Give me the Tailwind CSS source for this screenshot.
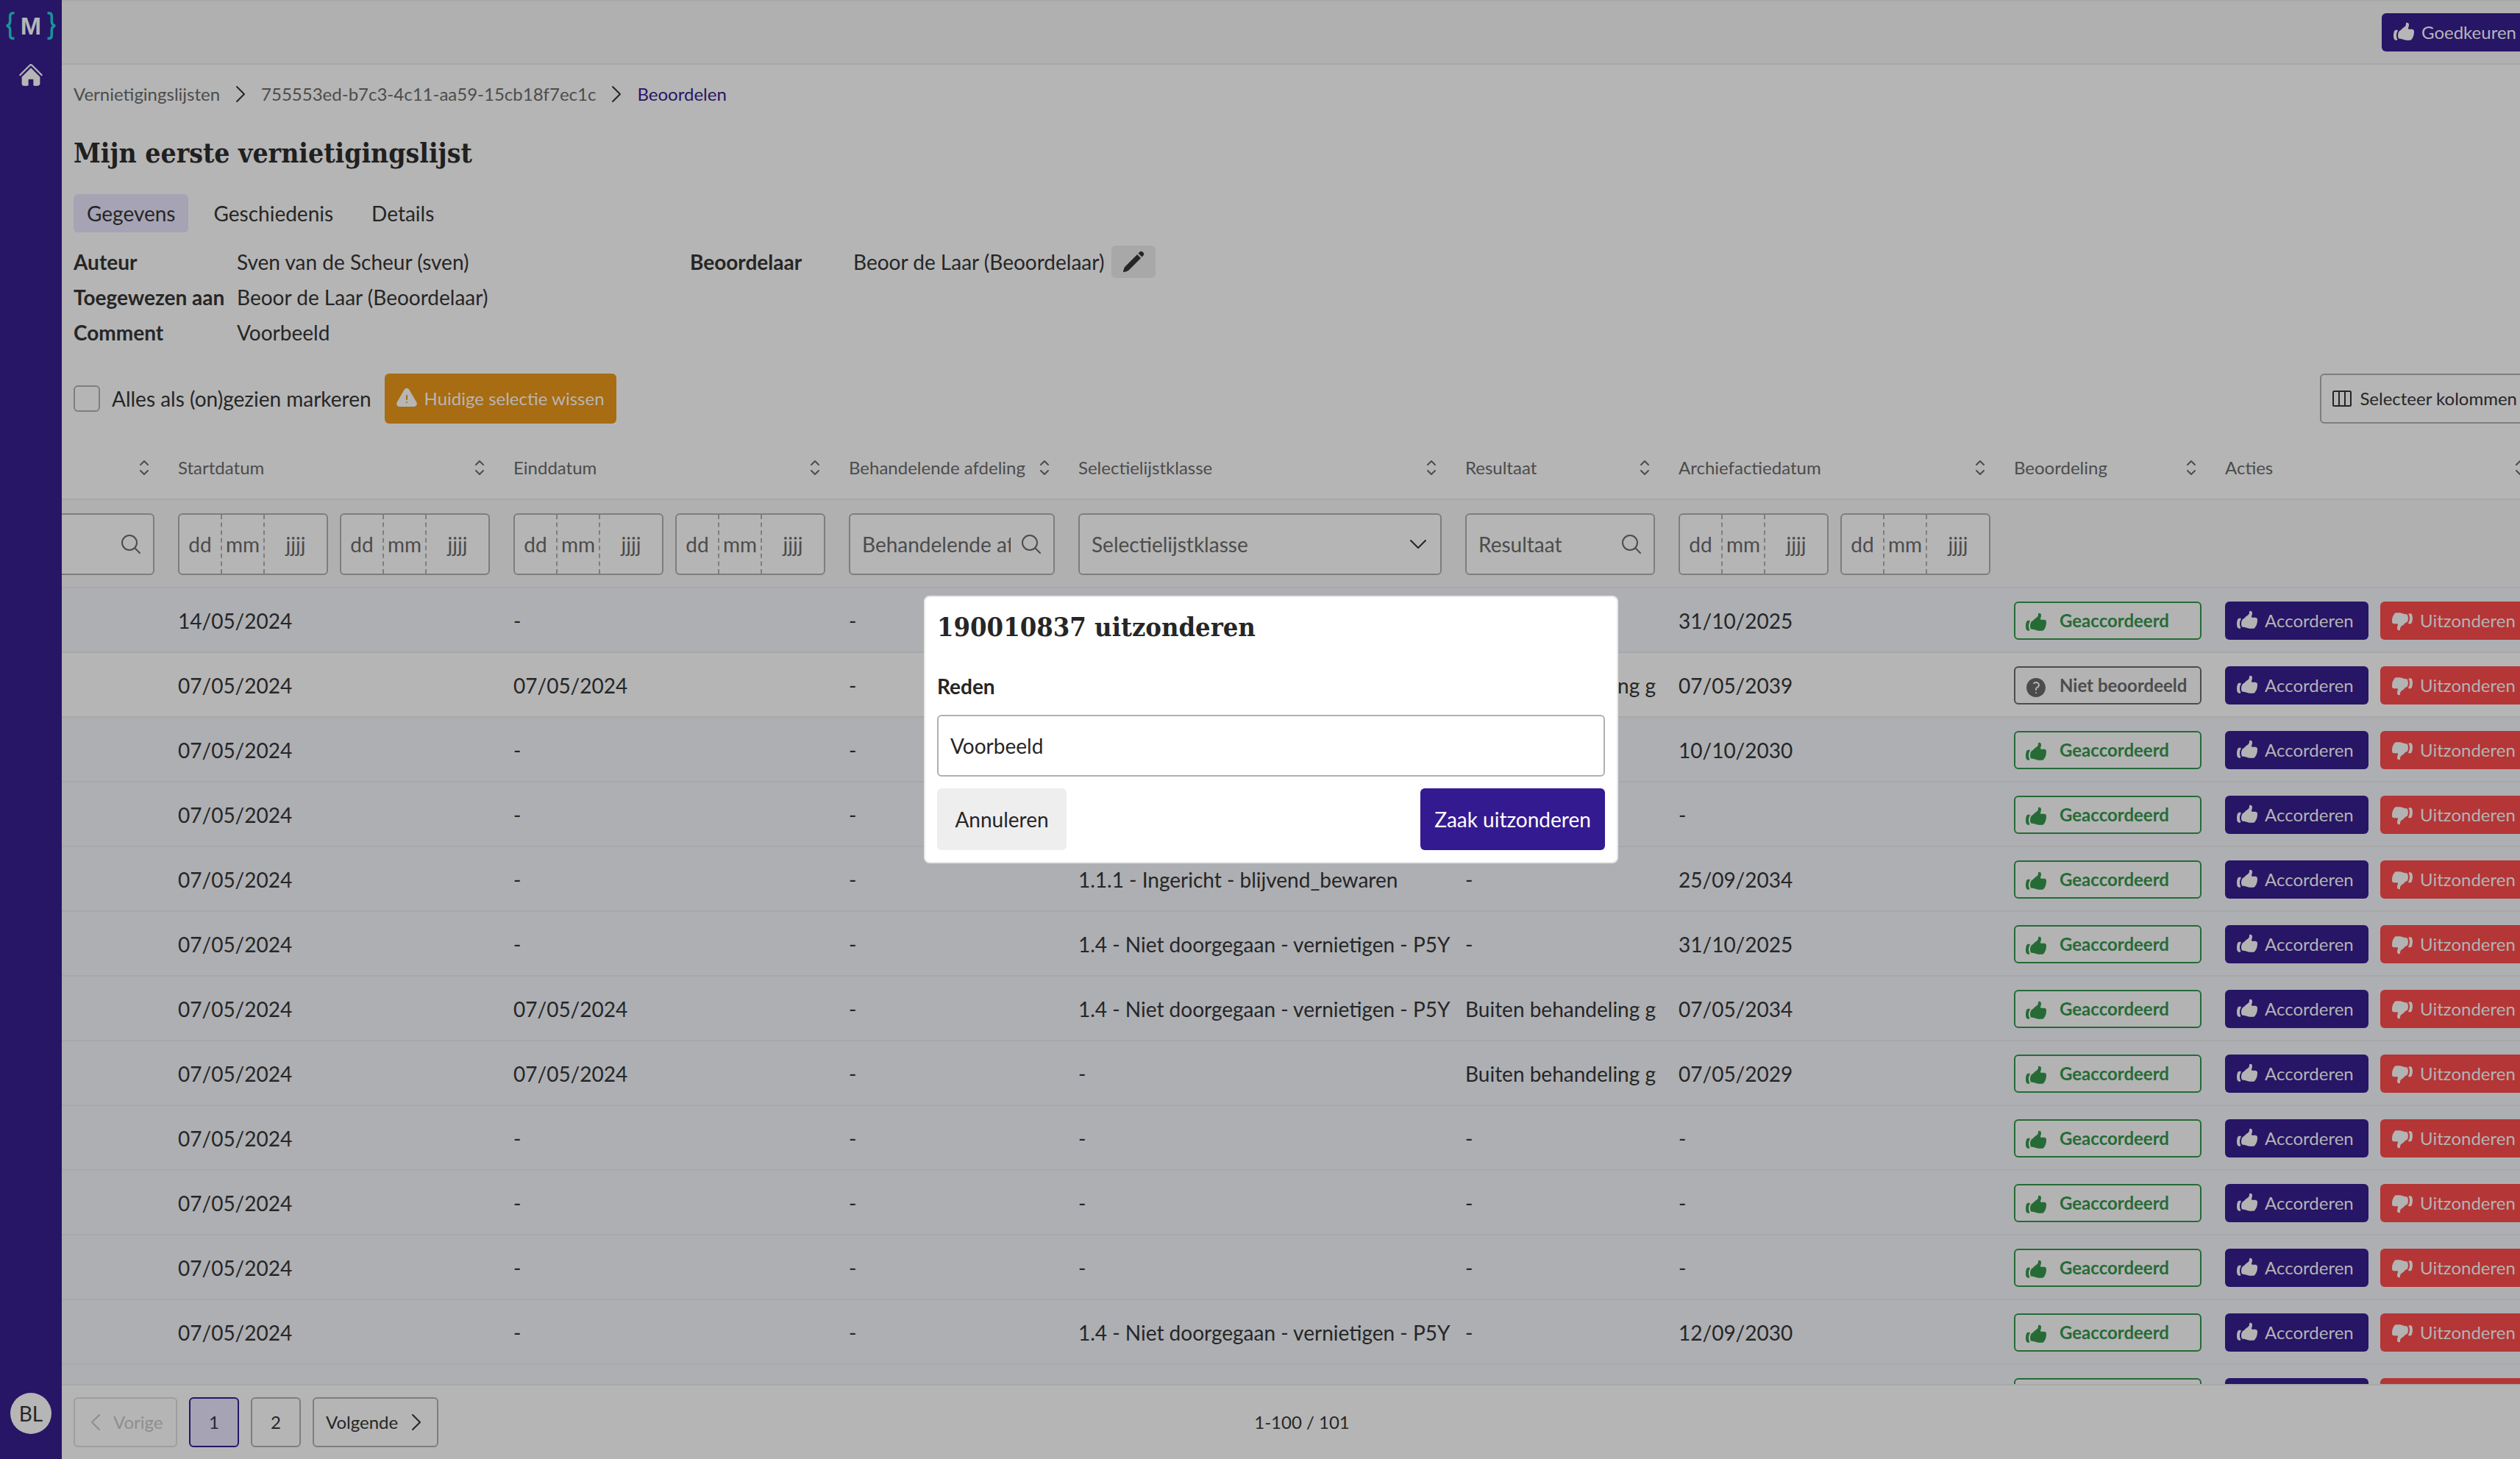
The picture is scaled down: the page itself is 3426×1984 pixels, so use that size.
<!DOCTYPE html>
<html lang="nl">
<head>
<meta charset="utf-8">
<meta name="viewport" content="width=device-width, initial-scale=1">
<title>Mijn eerste vernietigingslijst</title>
<script src="https://cdn.jsdelivr.net/npm/@tailwindcss/browser@4"></script>
</head>
<body class="flex h-screen overflow-hidden bg-[#b5b5b5] font-['Lato',sans-serif] text-[28px] leading-9 text-[#262626]">

<svg class="hidden" aria-hidden="true">
  <symbol id="up" viewBox="0 0 24 24"><path fill="currentColor" d="M7.493 18.5c-.425 0-.82-.236-.975-.632A7.48 7.48 0 0 1 6 15.125c0-1.75.599-3.358 1.602-4.634.151-.192.373-.309.6-.397.473-.183.89-.514 1.212-.924a9.042 9.042 0 0 1 2.861-2.4c.723-.384 1.35-.956 1.653-1.715a4.498 4.498 0 0 0 .322-1.672V2.75A.75.75 0 0 1 15 2a2.25 2.25 0 0 1 2.25 2.25c0 1.152-.26 2.243-.723 3.218-.266.558.107 1.282.725 1.282h3.126c1.026 0 1.945.694 2.054 1.715.045.422.068.85.068 1.285a11.95 11.95 0 0 1-2.649 7.521c-.388.482-.987.729-1.605.729H14.23c-.483 0-.964-.078-1.423-.23l-3.114-1.04a4.501 4.501 0 0 0-1.423-.23h-.777ZM2.331 10.727a11.969 11.969 0 0 0-.831 4.398 12 12 0 0 0 .52 3.507C2.28 19.482 3.105 20 3.994 20H4.9c.445 0 .72-.498.523-.898a8.963 8.963 0 0 1-.924-3.977c0-1.708.476-3.305 1.302-4.666.245-.403-.028-.959-.5-.959H4.25c-.832 0-1.612.453-1.918 1.227Z"/></symbol>
  <symbol id="down" viewBox="0 0 24 24"><path fill="currentColor" d="M15.73 5.5h1.035A7.465 7.465 0 0 1 18 9.625a7.465 7.465 0 0 1-1.235 4.125h-.148c-.806 0-1.534.446-2.031 1.08a9.04 9.04 0 0 1-2.861 2.4c-.723.384-1.35.956-1.653 1.715a4.499 4.499 0 0 0-.322 1.672v.633A.75.75 0 0 1 9 22a2.25 2.25 0 0 1-2.25-2.25c0-1.152.26-2.243.723-3.218.266-.558-.107-1.282-.725-1.282H3.622c-1.026 0-1.945-.694-2.054-1.715A12.137 12.137 0 0 1 1.5 12.25c0-2.848.992-5.464 2.649-7.521C4.537 4.247 5.136 4 5.754 4H9.77a4.5 4.5 0 0 1 1.423.23l3.114 1.04a4.5 4.5 0 0 0 1.423.23ZM21.669 14.023c.536-1.362.831-2.845.831-4.398 0-1.22-.182-2.398-.52-3.507-.26-.85-1.084-1.368-1.973-1.368H19.1c-.445 0-.72.498-.523.898.591 1.2.924 2.55.924 3.977a8.958 8.958 0 0 1-1.302 4.666c-.245.403.028.959.5.959h1.053c.832 0 1.612-.453 1.918-1.227Z"/></symbol>
  <symbol id="question" viewBox="0 0 24 24"><path fill="currentColor" fill-rule="evenodd" d="M2.25 12c0-5.385 4.365-9.75 9.75-9.75s9.75 4.365 9.75 9.75-4.365 9.75-9.75 9.75S2.25 17.385 2.25 12Zm11.378-3.917c-.89-.777-2.366-.777-3.255 0a.75.75 0 0 1-.988-1.129c1.454-1.272 3.776-1.272 5.23 0 1.513 1.324 1.513 3.518 0 4.842a3.75 3.75 0 0 1-.837.552c-.676.328-1.028.774-1.028 1.152v.75a.75.75 0 0 1-1.5 0v-.75c0-1.279 1.06-2.107 1.875-2.502.182-.088.351-.199.503-.331.83-.727.83-1.857 0-2.584ZM12 18a.75.75 0 1 0 0-1.5.75.75 0 0 0 0 1.5Z"/></symbol>
  <symbol id="search" viewBox="0 0 24 24"><path fill="none" stroke="currentColor" stroke-width="1.5" stroke-linecap="round" d="m21 21-5.197-5.197m0 0A7.5 7.5 0 1 0 5.196 5.196a7.5 7.5 0 0 0 10.607 10.607Z"/></symbol>
  <symbol id="sort" viewBox="0 0 24 24"><path fill="none" stroke="currentColor" stroke-width="1.5" stroke-linecap="round" stroke-linejoin="round" d="M8.25 15 12 18.75 15.75 15m-7.5-6L12 5.25 15.75 9"/></symbol>
  <symbol id="right" viewBox="0 0 24 24"><path fill="none" stroke="currentColor" stroke-width="1.5" stroke-linecap="round" stroke-linejoin="round" d="m8.25 4.5 7.5 7.5-7.5 7.5"/></symbol>
</svg>

<aside class="flex w-[84px] shrink-0 flex-col items-center bg-[#271566] pt-4 pb-[34px] text-[#b6b6b6]">
  <a href="#" aria-label="Maykin" class="flex h-[38px] items-center gap-2">
    <svg class="h-[38px] w-3 text-[#1a9297]" viewBox="0 0 12 38" fill="none" stroke="currentColor" stroke-width="3.6"><path d="M11.500 1.800H9.500Q5.700 1.800 5.700 6V13Q5.700 18 1 19Q5.700 20 5.700 25V32Q5.700 36.200 9.500 36.200H11.500"/></svg>
    <span class="font-['Liberation_Sans',sans-serif] text-[34px] leading-none font-bold">M</span>
    <svg class="h-[38px] w-3 text-[#1a9297]" viewBox="0 0 12 38" fill="none" stroke="currentColor" stroke-width="3.6"><path d="M0.500 1.800H2.500Q6.300 1.800 6.300 6V13Q6.300 18 11 19Q6.300 20 6.300 25V32Q6.300 36.200 2.500 36.200H0.500"/></svg>
  </a>
  <a href="#" aria-label="Home" class="mt-[30px]">
    <svg class="size-9" viewBox="0 0 24 24" fill="currentColor"><path d="M11.470 3.841a.75.75 0 0 1 1.060 0l8.690 8.690a.75.75 0 1 0 1.060-1.061l-8.689-8.690a2.250 2.250 0 0 0-3.182 0l-8.690 8.690a.75.75 0 1 0 1.061 1.060l8.690-8.689Z"/><path d="m12 5.432 8.159 8.159c.03.03.06.058.091.086v6.198c0 1.035-.84 1.875-1.875 1.875H15a.75.75 0 0 1-.75-.75v-4.500a.75.75 0 0 0-.75-.75h-3a.75.75 0 0 0-.75.75V21a.75.75 0 0 1-.75.75H5.625a1.875 1.875 0 0 1-1.875-1.875v-6.198a2.290 2.290 0 0 0 .091-.086L12 5.432Z"/></svg>
  </a>
  <button class="mt-auto size-14 rounded-full bg-[#b6b6b6] text-[28px] text-[#262626]">BL</button>
</aside>

<main class="flex min-w-0 flex-1 flex-col overflow-hidden">
  <header class="flex h-[88px] shrink-0 items-center justify-end border-y-2 border-[#a8a8a8] bg-[#b0b0b0]">
    <button class="-mr-2 flex h-[52px] w-[196px] items-center gap-2 rounded-md bg-[#271566] px-3.5 text-2xl whitespace-nowrap text-[#b6b6b6]"><svg class="size-8 shrink-0"><use href="#up"/></svg>Goedkeuren</button>
  </header>

  <nav aria-label="Kruimelpad" class="mt-[22px] ml-4 flex h-9 shrink-0 items-center gap-2 text-2xl text-[#4c4c4c]">
    <a href="#">Vernietigingslijsten</a>
    <svg class="mx-1 size-8 text-[#262626]"><use href="#right"/></svg>
    <a href="#">755553ed-b7c3-4c11-aa59-15cb18f7ec1c</a>
    <svg class="mx-1 size-8 text-[#262626]"><use href="#right"/></svg>
    <a href="#" class="text-[#271566]">Beoordelen</a>
  </nav>

  <h1 class="mt-[38px] ml-4 h-12 shrink-0 font-['DejaVu_Serif_Condensed','DejaVu_Serif',serif] text-[37px] leading-[48px] font-bold whitespace-nowrap text-[#202020]">Mijn eerste vernietigingslijst</h1>

  <div role="tablist" class="mt-8 ml-4 flex h-[52px] shrink-0 gap-4">
    <button role="tab" aria-selected="true" class="rounded-md bg-[#a6a3b4] px-[18px]">Gegevens</button>
    <button role="tab" class="px-[18px]">Geschiedenis</button>
    <button role="tab" class="px-[18px]">Details</button>
  </div>

  <div class="mt-4 ml-4 flex shrink-0 items-start gap-4 leading-[48px]">
    <dl class="grid w-[822px] grid-cols-[206px_1fr] gap-x-4">
      <dt class="font-bold whitespace-nowrap">Auteur</dt><dd>Sven van de Scheur (sven)</dd>
      <dt class="font-bold whitespace-nowrap">Toegewezen aan</dt><dd>Beoor de Laar (Beoordelaar)</dd>
      <dt class="font-bold whitespace-nowrap">Comment</dt><dd>Voorbeeld</dd>
    </dl>
    <dl class="grid w-[822px] grid-cols-[206px_1fr] gap-x-4">
      <dt class="font-bold">Beoordelaar</dt>
      <dd class="flex items-center gap-2.5">Beoor de Laar (Beoordelaar)
        <button aria-label="Beoordelaar bewerken" class="flex h-11 w-[60px] items-center justify-center rounded-md bg-[#a8a8a8]"><svg class="size-8" viewBox="0 0 24 24" fill="currentColor"><path d="M21.731 2.269a2.625 2.625 0 0 0-3.712 0l-1.157 1.157 3.712 3.712 1.157-1.157a2.625 2.625 0 0 0 0-3.712ZM19.513 8.199l-3.712-3.712-12.150 12.150a5.250 5.250 0 0 0-1.320 2.214l-.8 2.685a.75.75 0 0 0 .933.933l2.685-.8a5.250 5.250 0 0 0 2.214-1.320L19.513 8.200Z"/></svg></button>
      </dd>
    </dl>
  </div>

  <div class="mt-8 ml-4 flex h-[68px] shrink-0 items-center gap-[18px]">
    <label class="flex items-center gap-4 whitespace-nowrap"><input type="checkbox" class="size-9 appearance-none rounded-md border-2 border-[#7e7e7e]">Alles als (on)gezien markeren</label>
    <button class="flex h-full items-center gap-2 rounded-md bg-[#a86c12] pr-4 pl-3.5 text-2xl whitespace-nowrap text-[#b6b6b6]"><svg class="size-8" viewBox="0 0 24 24" fill="currentColor"><path fill-rule="evenodd" d="M9.401 3.003c1.155-2 4.043-2 5.197 0l7.355 12.748c1.154 2-.29 4.500-2.599 4.500H4.645c-2.309 0-3.752-2.500-2.598-4.500L9.400 3.003ZM12 8.250a.75.75 0 0 1 .75.75v3.750a.75.75 0 0 1-1.500 0V9a.75.75 0 0 1 .75-.75Zm0 8.250a.75.75 0 1 0 0-1.500.75.75 0 0 0 0 1.500Z"/></svg>Huidige selectie wissen</button>
    <button class="-mr-2.5 ml-auto flex h-full items-center gap-2 rounded-md border-2 border-[#7e7e7e] px-3 text-2xl whitespace-nowrap"><svg class="size-8" viewBox="0 0 24 24" fill="none" stroke="currentColor" stroke-width="1.500" stroke-linejoin="round"><path d="M9 4.500v15m6-15v15m-10.875 0h15.750c.621 0 1.125-.504 1.125-1.125V5.625c0-.621-.504-1.125-1.125-1.125H4.125C3.504 4.500 3 5.004 3 5.625v12.750c0 .621.504 1.125 1.125 1.125Z"/></svg>Selecteer kolommen</button>
  </div>

  <div class="mt-4 min-h-0 flex-1 overflow-hidden">
    <table class="w-[3372px] table-fixed border-separate border-spacing-0 text-left whitespace-nowrap">
      <colgroup><col class="w-[142px]"><col class="w-[456px]"><col class="w-[456px]"><col class="w-[312px]"><col class="w-[526px]"><col class="w-[290px]"><col class="w-[456px]"><col class="w-[287px]"><col class="w-[447px]"></colgroup>
      <thead>
        <tr id="heads" class="h-[88px]"></tr>
        <tr id="filters" class="h-[120px] bg-[#b0b0b0]"></tr>
      </thead>
      <tbody id="rows"></tbody>
    </table>
  </div>

  <footer class="-mr-[30px] flex h-[102px] shrink-0 items-center border-t-2 border-[#a8a8a8] px-4 text-2xl">
    <nav aria-label="Paginering" class="flex flex-1 gap-4">
      <button disabled class="flex h-[68px] w-[141px] items-center gap-2 rounded-md border-2 border-[#9e9e9e] pl-3 text-[#8e8e8e]"><svg class="size-8 rotate-180"><use href="#right"/></svg>Vorige</button>
      <button aria-current="page" class="h-[68px] w-[68px] rounded-md border-2 border-[#271566] bg-[#a6a3b4]">1</button>
      <button class="h-[68px] w-[68px] rounded-md border-2 border-[#7e7e7e]">2</button>
      <button class="flex h-[68px] w-[171px] items-center justify-between rounded-md border-2 border-[#7e7e7e] pr-3 pl-4">Volgende<svg class="size-8"><use href="#right"/></svg></button>
    </nav>
    <p>1-100 / 101</p>
    <div class="flex-1"></div>
  </footer>
</main>

<div class="fixed inset-0 flex items-center justify-center pl-[30px]">
  <form role="dialog" aria-modal="true" aria-labelledby="dlg-title" class="flex w-[944px] flex-col rounded-lg border-2 border-[#e8e8e8] bg-white p-4">
    <h2 id="dlg-title" class="font-['DejaVu_Serif_Condensed','DejaVu_Serif',serif] text-[36px] leading-[48px] font-bold">190010837 uitzonderen</h2>
    <label for="reason" class="mt-9 mb-[18px] leading-[42px] font-bold">Reden</label>
    <input id="reason" type="text" value="Voorbeeld" class="h-[84px] rounded-md border-2 border-[#b0b0b0] px-4">
    <div class="mt-4 flex justify-between">
      <button type="button" class="h-[84px] w-44 rounded-md bg-[#eeeeee]">Annuleren</button>
      <button type="button" class="h-[84px] w-[251px] rounded-md bg-[#341a90] text-white">Zaak uitzonderen</button>
    </div>
  </form>
</div>

<script>
const icon = (id, cls) => `<svg class="${cls} shrink-0"><use href="#${id}"/></svg>`;

const heads = ['', 'Startdatum', 'Einddatum', 'Behandelende afdeling', 'Selectielijstklasse', 'Resultaat', 'Archiefactiedatum', 'Beoordeling', 'Acties'];
document.getElementById('heads').innerHTML = heads.map(h =>
  `<th class="border-b-2 border-[#a8a8a8] px-4 pt-0.5 text-2xl font-normal text-[#4c4c4c]"><div class="flex items-center justify-between">${h ? `<a href="#">${h}</a>` : '<span></span>'}<span class="-mr-0.5">${icon('sort', 'size-8')}</span></div></th>`).join('');

const part = (ph, cls, name) => `<input type="text" aria-label="${name} ${ph}" placeholder="${ph}" class="h-full min-w-0 text-center placeholder:text-[#4c4c4c] ${cls}">`;
const date = name => `<div class="flex h-[84px] w-[204px] overflow-hidden rounded-md border-2 border-[#7e7e7e] bg-[#b5b5b5]">
  ${part('dd', 'w-[58px] border-r-2 border-dashed border-[#7e7e7e]', name)}${part('mm', 'w-[58px] border-r-2 border-dashed border-[#7e7e7e]', name)}${part('jjjj', 'flex-1', name)}</div>`;
const range = name => `<div class="flex gap-4">${date(name + ' vanaf')}${date(name + ' tot')}</div>`;
const search = name => `<div class="flex h-[84px] items-center gap-3 rounded-md border-2 border-[#7e7e7e] bg-[#b5b5b5] pr-3.5 pl-4 text-[#4c4c4c]">
  <input type="text" aria-label="${name}" placeholder="${name}" class="min-w-0 flex-1 placeholder:text-[#4c4c4c]">${icon('search', 'size-8')}</div>`;
const filters = [
  `<div class="flex h-[84px] items-center justify-end border-2 border-l-0 rounded-r-md border-[#7e7e7e] bg-[#b5b5b5] pr-3.5 text-[#4c4c4c]"><input type="text" aria-label="Zoeken" class="min-w-0 flex-1">${icon('search', 'size-8')}</div>`,
  range('Startdatum'), range('Einddatum'), search('Behandelende afdeling'),
  `<div class="relative"><select aria-label="Selectielijstklasse" class="h-[84px] w-full appearance-none rounded-md border-2 border-[#7e7e7e] bg-[#b5b5b5] px-4 text-[#4c4c4c]"><option>Selectielijstklasse</option></select>
   <svg class="pointer-events-none absolute inset-y-0 right-4 my-auto size-8" viewBox="0 0 24 24" fill="none" stroke="currentColor" stroke-width="1.500" stroke-linecap="round" stroke-linejoin="round"><path d="m19.500 8.250-7.500 7.500-7.500-7.500"/></svg></div>`,
  search('Resultaat'), range('Archiefactiedatum'), '', ''
];
document.getElementById('filters').innerHTML = filters.map((f, i) => `<td class="border-b-2 border-[#a8a8a8] pt-0.5 ${i ? 'px-4' : 'pr-4'}">${f}</td>`).join('');

const p5y = '1.4 - Niet doorgegaan - vernietigen - P5Y', out = 'Buiten behandeling g', may = '07/05/2024';
const data = [
  ['14/05/2024', '-', '-', '', '', '31/10/2025'],
  [may, may, '-', '', out, '07/05/2039'],
  [may, '-', '-', '', '', '10/10/2030'],
  [may, '-', '-', '', '', '-'],
  [may, '-', '-', '1.1.1 - Ingericht - blijvend_bewaren', '-', '25/09/2034'],
  [may, '-', '-', p5y, '-', '31/10/2025'],
  [may, may, '-', p5y, out, '07/05/2034'],
  [may, may, '-', '-', out, '07/05/2029'],
  [may, '-', '-', '-', '-', '-'],
  [may, '-', '-', '-', '-', '-'],
  [may, '-', '-', '-', '-', '-'],
  [may, '-', '-', p5y, '-', '12/09/2030'],
  ['', '', '', '', '', '']
];
const badge = ok => `<span class="flex h-[52px] items-center gap-4 rounded-md border-2 bg-[#b3b3b3] px-3 text-2xl font-bold ${ok ? 'border-[#266b36] text-[#266b36]' : 'border-[#4c4c4c] text-[#4c4c4c]'}">${icon(ok ? 'up' : 'question', 'size-8 mt-1.5')}${ok ? 'Geaccordeerd' : 'Niet beoordeeld'}</span>`;
const actions = `<div class="flex gap-4 text-2xl text-[#b3b3b3]">
  <button class="flex h-[52px] w-[195px] shrink-0 items-center gap-2 rounded-md bg-[#271566] pl-3.5">${icon('up', 'size-8')}Accorderen</button>
  <button class="flex h-[52px] w-[203px] shrink-0 items-center gap-2 rounded-md bg-[#b53636] pl-3.5">${icon('down', 'size-8')}Uitzonderen</button></div>`;
document.getElementById('rows').innerHTML = data.map((r, i) => {
  const ok = i !== 1;
  return `<tr class="h-[88px] ${ok ? 'bg-[#adafb3]' : 'bg-[#b5b5b5]'}">` +
    ['', ...r, badge(ok), actions].map(c => `<td class="border-b-2 border-[#a8a8a8] px-4 pt-0.5">${c}</td>`).join('') + '</tr>';
}).join('');
</script>
</body>
</html>
